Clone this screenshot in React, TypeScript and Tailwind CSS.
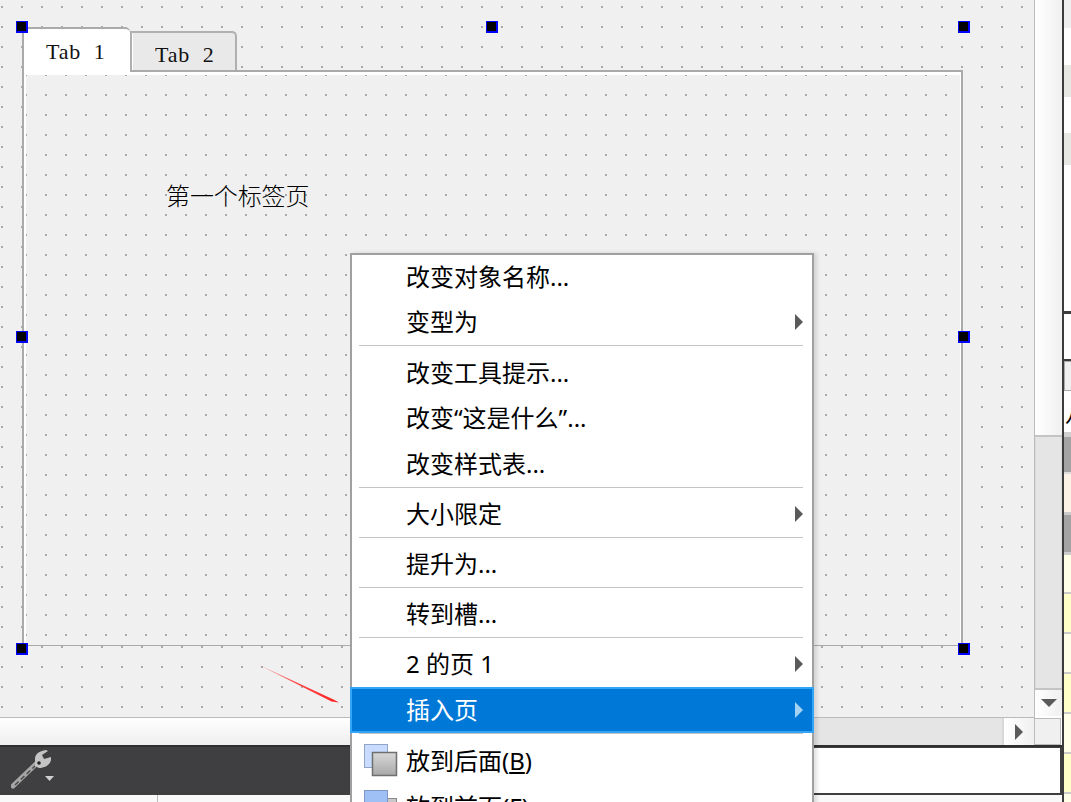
import type { ReactNode } from 'react'

const stripRows = [
  'h-[28px] bg-[#efefef]',
  'h-[37px] bg-white',
  'h-[32px] bg-[#e7e7e3]',
  'h-[36px] bg-white',
  'h-[32px] bg-[#e7e7e3]',
  'h-[146px] bg-white',
  'h-[3px] bg-[#3c3c3c]',
  'h-[45px] bg-white',
  'h-[2px] bg-[#3c3c3c]',
  'h-[30px] bg-[#f0f0f0] border-l border-y border-[#aaaaaa]',
  'h-[3px] bg-white',
]

const stripRowsLower = [
  'h-[5px] bg-[#d0d0d0]',
  'h-[35px] bg-[#a3a3a3]',
  'h-[2px] bg-[#dddddd]',
  'h-[38px] bg-[#fdf2e6]',
  'h-[3px] bg-[#cccccc]',
  'h-[37px] bg-[#a3a3a3]',
  'h-[3px] bg-[#cccccc]',
  'h-[37px] bg-[#ffffe8]',
  'h-[2px] bg-[#cccccc]',
  'h-[38px] bg-[#ffffc8]',
  'h-[2px] bg-[#cccccc]',
  'h-[38px] bg-[#ffffe8]',
  'h-[2px] bg-[#cccccc]',
  'h-[38px] bg-[#ffffc8]',
  'h-[2px] bg-[#cccccc]',
  'h-[38px] bg-[#ffffe8]',
  'h-[2px] bg-[#cccccc]',
  'h-[38px] bg-[#ffffc8]',
  'h-[2px] bg-[#cccccc]',
  'h-[8px] bg-[#ffffe8]',
]

function Handle({ className }: { className: string }) {
  return (
    <div
      className={`absolute w-3 h-3 bg-black border-l border-t border-r-2 border-b-2 border-[#0000ff] z-20 ${className}`}
    />
  )
}

function Arrow({ color = 'border-l-[#5a5a5a]' }: { color?: string }) {
  return (
    <div className={`w-0 h-0 border-y-[8px] border-y-transparent border-l-[8px] ${color}`} />
  )
}

function Sep() {
  return (
    <div className="h-[5px] pl-[7px] pr-[9px] shrink-0">
      <div className="h-px bg-[#c4c4c4]" />
    </div>
  )
}

function Item({
  children,
  h = 'h-[45px] pb-[2px]',
  sub,
  icon,
}: {
  children: ReactNode
  h?: string
  sub?: boolean
  icon?: ReactNode
}) {
  return (
    <div className={`${h} shrink-0 flex items-center relative pl-[54px] pr-[9px] text-[24px] text-black`}>
      {icon}
      <span className="flex-1 whitespace-nowrap">{children}</span>
      {sub && <Arrow />}
    </div>
  )
}

function BackIcon() {
  return (
    <svg className="absolute left-[12px] top-[6px]" width="34" height="33" viewBox="0 0 34 33">
      <defs>
        <linearGradient id="grayFace" x1="0" y1="0" x2="0" y2="1">
          <stop offset="0" stopColor="#d8d8d8" />
          <stop offset="1" stopColor="#a8a8a8" />
        </linearGradient>
      </defs>
      <rect x="0.5" y="0.5" width="23" height="23" fill="#c9dcff" stroke="#8fa6c9" />
      <rect x="8.5" y="8.5" width="24" height="23" fill="url(#grayFace)" stroke="#6f6f6f" strokeWidth="1.5" />
    </svg>
  )
}

function FrontIcon() {
  return (
    <svg className="absolute left-[12px] top-[6px]" width="34" height="33" viewBox="0 0 34 33">
      <rect x="8.5" y="8.5" width="24" height="23" fill="#c8c8c8" stroke="#8a8a8a" />
      <rect x="0.5" y="0.5" width="23" height="23" fill="#9fc0f5" stroke="#7d97c4" />
    </svg>
  )
}

function WrenchIcon() {
  return (
    <svg width="44" height="40" viewBox="0 0 44 40">
      <path d="M2 36 L25 14" stroke="#a6a6a6" strokeWidth="5" strokeLinecap="round" />
      <path d="M4 35 L24 16" stroke="#4a4a4a" strokeWidth="1.5" strokeDasharray="5 3" />
      <path
        d="M24 9 C24 4 28 1 35 0 L37 1 L31 5 L33 9 L40 7 L40 10 C39 15 34 18 28 18 L24 16 Z"
        fill="#c4c4c4"
      />
      <circle cx="28" cy="13" r="1.8" fill="#222222" />
      <path d="M34 26 L43 26 L38.5 31 Z" fill="#cfcfcf" />
    </svg>
  )
}

export default function App() {
  return (
    <div className="w-[1071px] h-[802px] relative overflow-hidden flex bg-white font-['Noto_Sans','Noto_Sans_CJK_SC',sans-serif]">
      {/* left side: designer and bottom bar */}
      <div className="w-[1062px] shrink-0 flex flex-col">
        <div className="flex h-[718px] shrink-0">
          {/* form canvas */}
          <div className="relative w-[1035px] h-[718px] border-r border-b border-[#bbbbbb] pl-[22px] pt-[27px] bg-[#f0f0f0] bg-[conic-gradient(from_270deg_at_2px_2px,#aaaaaa_25%,transparent_0)] bg-[length:20px_20px] bg-[position:1px_6px]">
            <div className="w-[941px]">
              <div className="flex items-start h-[43px] font-['Liberation_Serif','Noto_Sans_CJK_SC',serif] text-[22px] text-[#111111]">
                <div className="relative z-10 w-[108px] h-[45px] bg-white border-l-2 border-t-2 border-[#aaaaaa] rounded-tr-[5px] pl-[22px] pt-[10px] leading-[26px] tracking-[0.8px] whitespace-pre">
                  Tab  1
                </div>
                <div className="w-[107px] h-[40px] mt-[4px] bg-[#e9e9e9] border-l-2 border-t-2 border-r-2 border-[#b0b0b0] rounded-tr-[5px] shadow-[inset_1px_0_0_#ffffff] pl-[23px] pt-[9px] leading-[26px] tracking-[0.8px] whitespace-pre">
                  Tab  2
                </div>
              </div>
              <div className="relative h-[576px] border-t-2 border-x-2 border-b border-[#aaaaaa] pl-[142px] pt-[109px] bg-[#f0f0f0] bg-[conic-gradient(from_270deg_at_2px_2px,#aaaaaa_25%,transparent_0)] bg-[length:20px_20px] bg-[position:1px_2px] shadow-[inset_2px_3px_0_#ffffff,inset_-1px_0_0_#ffffff]">
                <div className="text-[24px] leading-[28px] font-light text-black tracking-[-0.1px] font-['Noto_Sans_CJK_SC',serif]">
                  第一个标签页
                </div>
              </div>
            </div>

            <Handle className="left-[16px] top-[21px]" />
            <Handle className="left-[486px] top-[21px]" />
            <Handle className="left-[958px] top-[21px]" />
            <Handle className="left-[16px] top-[331px]" />
            <Handle className="left-[958px] top-[331px]" />
            <Handle className="left-[16px] top-[643px]" />
            <Handle className="left-[958px] top-[643px]" />

            {/* red annotation arrow */}
            <svg className="absolute left-[250px] top-[660px]" width="95" height="48" viewBox="0 0 95 48">
              <defs>
                <linearGradient id="redFade" x1="0" y1="0" x2="1" y2="0">
                  <stop offset="0" stopColor="#ff3333" stopOpacity="0.4" />
                  <stop offset="0.5" stopColor="#ff3333" stopOpacity="0.9" />
                  <stop offset="1" stopColor="#ff2222" />
                </linearGradient>
              </defs>
              <path d="M7 4 L83.5 39.5 L89 42.5 L81.5 41.5 Z" fill="url(#redFade)" />
            </svg>
          </div>

          {/* vertical scrollbar */}
          <div className="w-[27px] flex flex-col">
            <div className="h-[437px] bg-gradient-to-r from-white to-[#f0f0f0] border-b-2 border-[#c4c4c4]" />
            <div className="h-[251px] bg-[#e5e5e5] border-x border-[#dcdcdc]" />
            <div className="h-[28px] bg-gradient-to-r from-white to-[#f0f0f0] border-t-2 border-[#c4c4c4] flex items-center justify-center">
              <div className="w-0 h-0 border-x-[8px] border-x-transparent border-t-[8px] border-t-[#5a5a5a]" />
            </div>
            <div className="h-[2px]" />
          </div>
        </div>

        {/* horizontal scrollbar */}
        <div className="flex h-[27px] shrink-0">
          <div className="w-[600px] bg-gradient-to-b from-white to-[#eeeeee]" />
          <div className="w-[404px] bg-[#e5e5e5] border-r-2 border-[#d8d8d8]" />
          <div className="w-[30px] bg-gradient-to-r from-white to-[#f0f0f0] flex items-center justify-center">
            <Arrow />
          </div>
          <div className="w-[27px] bg-[#f0f0f0] border border-[#bbbbbb]" />
        </div>

        {/* dark tool bar */}
        <div className="h-[50px] shrink-0 bg-[#3f3f41] border-t-2 border-[#2f2f2f] flex justify-between pb-[2px] pr-[2px]">
          <div className="pl-[11px] pt-[3px]">
            <WrenchIcon />
          </div>
          <div className="w-[300px] bg-white mt-px" />
        </div>

        {/* status strip */}
        <div className="flex-1 bg-[#f9f9f9] pl-[157px]">
          <div className="w-px h-full bg-[#bbbbbb]" />
        </div>
      </div>

      <div className="w-[2px] shrink-0 bg-[#3c3c3c]" />

      {/* right strip, cut off by the window */}
      <div className="w-[7px] shrink-0 flex flex-col overflow-hidden">
        {stripRows.map((row, i) => (
          <div key={i} className={`${row} shrink-0`} />
        ))}
        <div className="h-[38px] shrink-0 bg-white pl-[1px] text-[24px] leading-[38px] text-black whitespace-nowrap">
          八
        </div>
        {stripRowsLower.map((row, i) => (
          <div key={i} className={`${row} shrink-0`} />
        ))}
      </div>

      {/* context menu */}
      <div className="absolute left-[350px] top-[253px] w-[464px] h-[560px] bg-white border-2 border-[#a0a0a0] shadow-[3px_0_4px_rgba(0,0,0,0.12)] z-30 flex flex-col">
        <Item>改变对象名称...</Item>
        <Item sub>变型为</Item>
        <Sep />
        <Item h="h-[46px]">改变工具提示...</Item>
        <Item h="h-[46px] pb-[2px]">改变“这是什么”...</Item>
        <Item>改变样式表...</Item>
        <Sep />
        <Item sub>大小限定</Item>
        <Sep />
        <Item>提升为...</Item>
        <Sep />
        <Item>转到槽...</Item>
        <Sep />
        <Item sub>2 的页 1</Item>
        <div className="h-[46px] shrink-0 -mx-[2px] bg-[#0078d7] border-2 border-[#33a5f7] flex items-center pl-[54px] pr-[9px] text-[24px] text-white">
          <span className="flex-1">插入页</span>
          <Arrow color="border-l-[#a3d2f3]" />
        </div>
        <Sep />
        <Item h="h-[46px]" icon={<BackIcon />}>
          放到后面(<u>B</u>)
        </Item>
        <Item h="h-[46px]" icon={<FrontIcon />}>
          放到前面(<u>F</u>)
        </Item>
      </div>
    </div>
  )
}
